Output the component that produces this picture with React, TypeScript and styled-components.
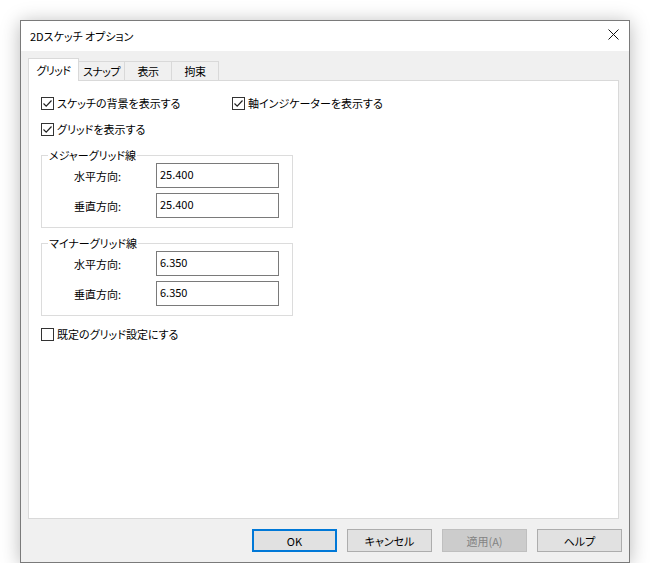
import styled, { createGlobalStyle } from 'styled-components'

const GlobalStyle = createGlobalStyle`
  html, body {
    margin: 0;
    background: #ffffff;
  }
  body {
    font-family: "Noto Sans CJK JP", "Noto Sans", sans-serif;
    font-size: 11px;
    font-feature-settings: "palt";
    color: #000000;
  }
`

const CheckIcon = () => (
  <svg width="11" height="11" viewBox="0 0 11 11">
    <path d="M1.5 5.5 L4.2 8.2 L9.5 2.5" fill="none" stroke="#222" strokeWidth="1.2" />
  </svg>
)

const CloseIcon = () => (
  <svg width="11" height="11" viewBox="0 0 11 11">
    <path d="M0.5 0.5 L10.5 10.5 M10.5 0.5 L0.5 10.5" stroke="#111" strokeWidth="1" />
  </svg>
)

const CheckOption = ({ label, checked, width }: { label: string; checked?: boolean; width?: number }) => (
  <Check style={width ? { width } : undefined}>
    <Box>{checked && <CheckIcon />}</Box>
    <span>{label}</span>
  </Check>
)

const GridGroup = ({ title, h, v }: { title: string; h: string; v: string }) => (
  <Group>
    <Legend>{title}</Legend>
    <Fields>
      <Field>
        <FieldLabel>水平方向:</FieldLabel>
        <Input>{h}</Input>
      </Field>
      <Field>
        <FieldLabel>垂直方向:</FieldLabel>
        <Input>{v}</Input>
      </Field>
    </Fields>
  </Group>
)

const tabs = [
  { label: 'グリッド', width: 51 },
  { label: 'スナップ', width: 46 },
  { label: '表示', width: 47 },
  { label: '拘束', width: 47 },
]

const App = () => {
  return (
    <Page>
      <GlobalStyle />
      <Window>
        <TitleBar>
          <span>2Dスケッチ オプション</span>
          <CloseButton>
            <CloseIcon />
          </CloseButton>
        </TitleBar>
        <Body>
          <TabStrip>
            {tabs.map((t, i) => (
              <Tab key={t.label} $active={i === 0} $width={t.width}>
                {t.label}
              </Tab>
            ))}
          </TabStrip>
          <Panel>
            <Row>
              <CheckOption label="スケッチの背景を表示する" checked width={191} />
              <CheckOption label="軸インジケーターを表示する" checked />
            </Row>
            <Row>
              <CheckOption label="グリッドを表示する" checked />
            </Row>
            <GridGroup title="メジャーグリッド線" h="25.400" v="25.400" />
            <GridGroup title="マイナーグリッド線" h="6.350" v="6.350" />
            <Row $top={10}>
              <CheckOption label="既定のグリッド設定にする" />
            </Row>
          </Panel>
          <Footer>
            <Button $default>OK</Button>
            <Button>キャンセル</Button>
            <Button disabled>適用(A)</Button>
            <Button>ヘルプ</Button>
          </Footer>
        </Body>
      </Window>
    </Page>
  )
}

export default App

const Page = styled.div`
  padding: 20px 0 0 20px;
`

const Window = styled.div`
  width: 608px;
  height: 541px;
  border: 1px solid #7a7a7a;
  background: #f0f0f0;
  box-shadow: 0 2px 18px rgba(0, 0, 0, 0.28);
  display: flex;
  flex-direction: column;
`

const TitleBar = styled.div`
  height: 30px;
  flex: none;
  background: #ffffff;
  display: flex;
  align-items: center;
  justify-content: space-between;
  padding: 0 10px 0 9px;
  line-height: 16px;
`

const CloseButton = styled.div`
  display: flex;
  align-items: center;
  margin-top: -3px;
`

const Body = styled.div`
  flex: 1;
  display: flex;
  flex-direction: column;
  padding: 8px 10px 0 7px;
`

const TabStrip = styled.div`
  display: flex;
  align-items: flex-end;
  height: 22px;
  margin-bottom: -1px;
  position: relative;
  z-index: 1;
`

const Tab = styled.div<{ $active?: boolean; $width: number }>`
  box-sizing: border-box;
  flex: none;
  width: ${(p) => p.$width}px;
  height: ${(p) => (p.$active ? 23 : 20)}px;
  border: 1px solid #d9d9d9;
  border-bottom: ${(p) => (p.$active ? 'none' : '1px solid #d9d9d9')};
  border-left: ${(p) => (p.$active ? '1px solid #d9d9d9' : 'none')};
  background: ${(p) => (p.$active ? '#ffffff' : '#f0f0f0')};
  display: flex;
  align-items: center;
  justify-content: center;
  padding-bottom: ${(p) => (p.$active ? 1 : 0)}px;
  line-height: 16px;
  letter-spacing: -0.6px;
  white-space: nowrap;
  overflow: hidden;
`

const Panel = styled.div`
  box-sizing: border-box;
  width: 591px;
  height: 439px;
  background: #ffffff;
  border: 1px solid #d9d9d9;
  padding: 14px 0 0 12px;
  display: flex;
  flex-direction: column;
`

const Row = styled.div<{ $top?: number }>`
  display: flex;
  height: 16px;
  margin-top: ${(p) => p.$top ?? 0}px;
  & + & {
    margin-top: ${(p) => p.$top ?? 11}px;
  }
`

const Check = styled.label`
  display: flex;
  align-items: center;
  gap: 3px;
  line-height: 16px;
  white-space: nowrap;
`

const Box = styled.span`
  box-sizing: border-box;
  flex: none;
  width: 13px;
  height: 13px;
  border: 1px solid #333333;
  background: #ffffff;
  display: flex;
  align-items: center;
  justify-content: center;
`

const Group = styled.fieldset`
  box-sizing: border-box;
  width: 252px;
  margin: 10px 0 0 0;
  padding: 0 0 9px 0;
  border: 1px solid #dcdcdc;
  & + & {
    margin-top: 7px;
  }
`

const Legend = styled.legend`
  margin-left: 6px;
  padding: 0 1px;
  line-height: 16px;
`

const Fields = styled.div`
  display: flex;
  flex-direction: column;
  gap: 5px;
  padding-left: 32px;
`

const Field = styled.div`
  display: flex;
  align-items: center;
`

const FieldLabel = styled.span`
  width: 82px;
  line-height: 16px;
  padding-top: 1px;
`

const Input = styled.div`
  box-sizing: border-box;
  width: 123px;
  height: 25px;
  border: 1px solid #7a7a7a;
  background: #ffffff;
  padding: 2px 0 0 3px;
  line-height: 16px;
`

const Footer = styled.div`
  display: flex;
  justify-content: flex-end;
  gap: 10px;
  padding: 10px 0 0 0;
  margin-right: -3px;
`

const Button = styled.button<{ $default?: boolean }>`
  box-sizing: border-box;
  width: 85px;
  height: 23px;
  font-family: inherit;
  font-size: 11px;
  font-feature-settings: "palt";
  line-height: 16px;
  padding: 0;
  color: #000000;
  background: #e1e1e1;
  border: ${(p) => (p.$default ? '2px solid #0078d7' : '1px solid #adadad')};
  &:disabled {
    background: #cccccc;
    border-color: #bfbfbf;
    color: #838383;
  }
`
